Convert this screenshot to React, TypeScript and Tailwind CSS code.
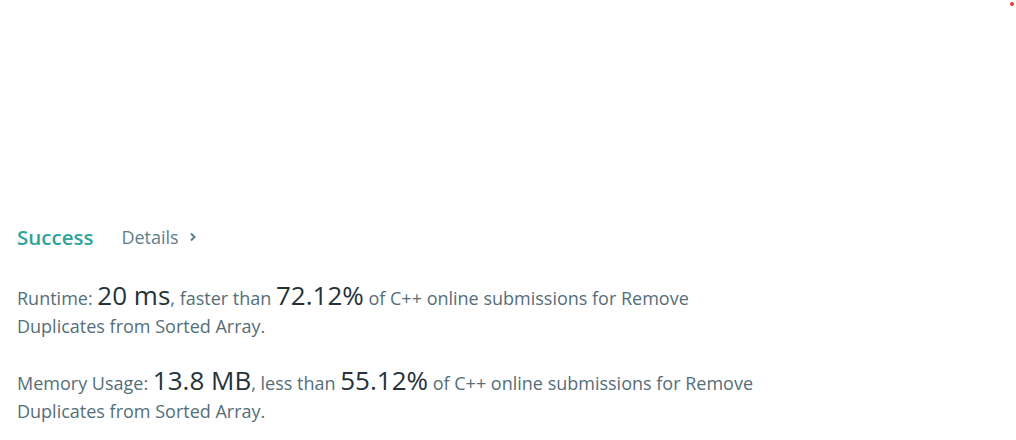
const Stat = ({ label, value, cmp, pct }: { label: string; value: string; cmp: string; pct: string }) => (
  <p className="text-[18px] leading-[28px] text-[#546e7a]">
    {label}: <span className="text-[26px] leading-none text-[#263238]">{value}</span>, {cmp} than{" "}
    <span className="text-[26px] leading-none text-[#263238]">{pct}</span> of C++ online submissions for Remove
    <br />
    Duplicates from Sorted Array.
  </p>
);

export default function App() {
  return (
    <div className="relative w-[1016px] h-[440px] bg-white" style={{ fontFamily: '"Open Sans", sans-serif' }}>
      <div className="absolute top-[2px] right-[2px] w-[4px] h-[4px] rounded-full bg-[#e53935]" />
      <div className="pt-[222px] pl-[17px]">
        <div className="flex items-center gap-[28px]">
          <span className="text-[20.5px] font-semibold text-[#2fa499]">Success</span>
          <span className="text-[18px] text-[#607d8b] flex items-center gap-[10px]">
            Details
            <svg width="8" height="10" viewBox="0 0 8 10" fill="none" stroke="#607d8b" strokeWidth="2">
              <path d="M2 1.5 L5.5 5 L2 8.5" />
            </svg>
          </span>
        </div>
        <div className="mt-[29px] flex flex-col gap-[27px]">
          <Stat label="Runtime" value="20 ms" cmp="faster" pct="72.12%" />
          <Stat label="Memory Usage" value="13.8 MB" cmp="less" pct="55.12%" />
        </div>
      </div>
    </div>
  );
}
